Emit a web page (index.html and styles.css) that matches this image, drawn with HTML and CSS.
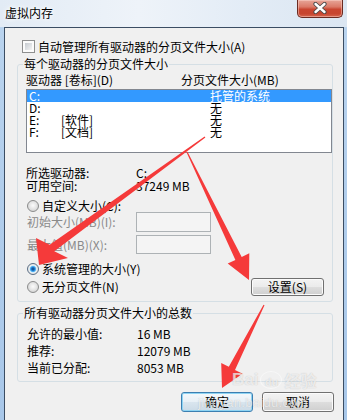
FILE: index.html
```html
<!DOCTYPE html>
<html lang="zh-CN">
<head>
<meta charset="utf-8">
<title>虚拟内存</title>
<link rel="stylesheet" href="styles.css">
</head>
<body>
<div class="window">
  <div class="titlebar">
    <span class="title">虚拟内存</span>
    <div class="close">
      <svg width="14" height="12" viewBox="0 0 14 12">
        <path d="M2.5 2 L11.5 10 M11.5 2 L2.5 10" stroke="#4a4a4a" stroke-width="4.2" stroke-linecap="round"/>
        <path d="M2.5 2 L11.5 10 M11.5 2 L2.5 10" stroke="#ffffff" stroke-width="2.4" stroke-linecap="round"/>
      </svg>
    </div>
  </div>
  <div class="client">
    <div class="check-row"><span class="checkbox"></span><span>自动管理所有驱动器的分页文件大小(A)</span></div>

    <fieldset class="group g1">
      <legend>每个驱动器的分页文件大小</legend>
      <div class="gbody">
        <div class="cols"><span>驱动器 [卷标](D)</span><span>分页文件大小(MB)</span></div>
        <div class="listbox">
          <div class="row sel"><span>C:</span><span></span><span>托管的系统</span></div>
          <div class="row"><span>D:</span><span></span><span>无</span></div>
          <div class="row"><span>E:</span><span>[软件]</span><span>无</span></div>
          <div class="row"><span>F:</span><span>[文档]</span><span>无</span></div>
        </div>
        <div class="info">
          <span>所选驱动器:</span><span>C:</span>
          <span>可用空间:</span><span>37249 MB</span>
        </div>
        <div class="radio-row r1"><span class="radio"></span><span>自定义大小(C):</span></div>
        <div class="field f1"><span class="flabel">初始大小(MB)(I):</span><span class="input"></span></div>
        <div class="field f2"><span class="flabel">最大值(MB)(X):</span><span class="input"></span></div>
        <div class="radio-row r2"><span class="radio on"></span><span>系统管理的大小(Y)</span></div>
        <div class="last-row">
          <div class="radio-row"><span class="radio"></span><span>无分页文件(N)</span></div>
          <button class="btn set">设置(S)</button>
        </div>
      </div>
    </fieldset>

    <fieldset class="group g2">
      <legend>所有驱动器分页文件大小的总数</legend>
      <div class="gbody totals">
        <span>允许的最小值:</span><span>16 MB</span>
        <span>推荐:</span><span>12079 MB</span>
        <span>当前已分配:</span><span>8053 MB</span>
      </div>
    </fieldset>

    <div class="buttons">
      <button class="btn default">确定</button>
      <button class="btn">取消</button>
    </div>
  </div>

  <svg class="annot" width="347" height="420" viewBox="0 0 347 420">
    <polygon fill="#f53a3a" points="205.4,137.5 54.3,251.2 68,258 39,265 36,238 49.7,244.8 204.6,136.5"/>
    <polygon fill="#f53a3a" points="187.5,151.7 241.7,256.9 249.3,253.2 249,280 227.7,263.6 235.4,259.9 186.5,152.3"/>
    <polygon fill="#f53a3a" points="264.5,305.3 235,370 242.6,373.8 222,388 221.2,363 228.8,366.8 263.5,304.7"/>
  </svg>

  <div class="watermark">
    <div class="wm-logo"><span class="wm-bai">Bai</span><span class="wm-paw">du</span><span class="wm-jy">经验</span></div>
    <div class="wm-url">jingyan.baidu.com</div>
  </div>
</div>
</body>
</html>
```

FILE: styles.css
```css
* { box-sizing: border-box; }
html, body { margin: 0; padding: 0; }
body {
  width: 347px;
  height: 420px;
  overflow: hidden;
  font-family: "Noto Sans CJK SC", "Noto Sans", sans-serif;
  font-size: 12px;
  color: #000;
}
.window {
  position: relative;
  width: 347px;
  height: 420px;
  display: flex;
  flex-direction: column;
  background: linear-gradient(to bottom, #e9f0f8 0, #dae6f3 27px, #b9d3ee 27px, #a8c7e9 100%);
}
.titlebar {
  height: 27px;
  display: flex;
  align-items: flex-start;
  padding-left: 5px;
  background: linear-gradient(to right, #e2ebf5 0, #eef3f9 40%, #e3ecf6 70%, #dbe6f2 100%);
}
.title {
  margin-top: 6px;
  line-height: 13px;
  font-size: 12px;
  text-shadow: 0 0 4px #fff, 0 0 6px #fff;
}
.close {
  margin-left: auto;
  margin-right: 4px;
  width: 46px;
  height: 18px;
  border: 1px solid #6a2b22;
  border-top: 0;
  border-radius: 0 0 5px 5px;
  background: linear-gradient(to bottom, #e7a598 0, #db7a68 40%, #c94530 55%, #c7452f 80%, #d5664f 100%);
  box-shadow: inset 0 0 0 1px rgba(255, 220, 210, 0.45);
  display: flex;
  align-items: center;
  justify-content: center;
}
.close svg { display: block; margin-top: -1px; }
.client {
  flex: 1;
  margin: 0 3px 0 4px;
  border: 1px solid #3b4d63;
  border-bottom: 0;
  background: #f0f0f0;
  padding-top: 12px;
}
.check-row {
  display: flex;
  align-items: center;
  height: 13px;
  line-height: 13px;
  margin-left: 17px;
}
.checkbox {
  width: 13px;
  height: 13px;
  margin-right: 3px;
  border: 1px solid #8e8f8f;
  padding: 2px;
  background: linear-gradient(135deg, #c5cad0, #f4f4f4) content-box, #fbfbfb;
}
.group {
  margin: 5px 10px 0 12px;
  padding: 0;
  border: 1px solid #d5dfe5;
  border-radius: 3px;
  min-width: 0;
}
.group legend {
  margin-left: 5px;
  padding: 0 1px;
  line-height: 12px;
  font-size: 12px;
}
.gbody { padding: 0 8px 5px 8px; }
.cols {
  display: grid;
  grid-template-columns: 155px auto;
  margin-top: 3px;
  line-height: 13px;
  height: 13px;
}
.listbox {
  margin-top: 3px;
  width: 306px;
  height: 64px;
  border: 1px solid #828790;
  background: #fff;
}
.row {
  display: grid;
  grid-template-columns: 32px 149px auto;
  height: 12px;
  line-height: 12px;
  padding-left: 2px;
  white-space: nowrap;
}
.row.sel { background: #3399ff; color: #fff; }
.info {
  margin-top: 13px;
  display: grid;
  grid-template-columns: 110px auto;
  grid-auto-rows: 13px;
  line-height: 13px;
}
.radio-row {
  display: flex;
  align-items: center;
  height: 12px;
  line-height: 12px;
  padding-left: 1px;
  white-space: nowrap;
}
.radio {
  flex: none;
  width: 12px;
  height: 12px;
  margin-right: 3px;
  border-radius: 50%;
  border: 1px solid #8b8c8c;
  background: radial-gradient(circle at 50% 45%, #fbfbfb 0, #e6e6e6 45%, #c8c8c8 100%);
}
.radio.on {
  border-color: #5b6f86;
  background: radial-gradient(circle at 50% 50%, #103e74 0, #1f73c4 1.6px, #58b8f5 2.8px, #c9ecff 3.4px, #eeeeee 3.9px, #d2d2d2 100%);
}
.r1 { margin-top: 8px; }
.field {
  display: flex;
  align-items: center;
  color: #8a8a8a;
  white-space: nowrap;
}
.flabel { width: 110px; padding-left: 1px; line-height: 12px; }
.f1 { height: 20px; }
.f2 { height: 19px; margin-top: 3px; }
.input {
  width: 75px;
  height: 100%;
  border: 1px solid #adb2b5;
  background: #f4f4f4;
}
.r2 { margin-top: 9px; }
.last-row {
  margin-top: 3px;
  height: 18px;
  display: flex;
  align-items: center;
  justify-content: space-between;
}
.btn {
  font-family: "Noto Sans CJK SC", "Noto Sans", sans-serif;
  font-size: 12px;
  color: #000;
  padding: 0;
  border: 1px solid #707070;
  border-radius: 3px;
  background: linear-gradient(to bottom, #f3f3f3 0, #ebebeb 48%, #dddddd 52%, #cfcfcf 100%);
  box-shadow: inset 0 0 0 1px #fbfbfb;
  display: flex;
  align-items: center;
  justify-content: center;
  line-height: 12px;
}
.btn.set { width: 73px; height: 18px; }
.totals {
  display: grid;
  grid-template-columns: 110px auto;
  grid-auto-rows: 17px;
  line-height: 17px;
  padding: 6px 8px 5px 9px;
}
.buttons {
  display: flex;
  justify-content: flex-end;
  gap: 9px;
  margin-top: 10px;
  padding-right: 9px;
}
.buttons .btn { width: 72px; height: 20px; }
.btn.default {
  border-color: #3c7fb1;
  box-shadow: inset 0 0 0 1px #8ed4f3;
  background: linear-gradient(to bottom, #f4f8fb 0, #e8f0f6 48%, #d9e5ee 52%, #cbdbe7 100%);
}
.annot {
  position: absolute;
  left: 0;
  top: 0;
  pointer-events: none;
}
.watermark {
  position: absolute;
  left: 198px;
  top: 370px;
  width: 125px;
  pointer-events: none;
  color: rgba(255, 255, 255, 0.7);
  text-shadow: 0 0 1px rgba(90, 90, 90, 0.35);
}
.wm-logo {
  display: flex;
  align-items: center;
  padding-left: 34px;
  height: 20px;
  font-family: "Liberation Sans", sans-serif;
  font-weight: bold;
  font-size: 17px;
}
.wm-paw {
  font-size: 11px;
  margin: 0 2px;
  width: 22px;
  height: 18px;
  border-radius: 50%;
  display: flex;
  align-items: flex-end;
  justify-content: center;
  border: 1px solid rgba(255,255,255,0.5);
}
.wm-jy { font-family: "Noto Sans CJK SC", sans-serif; font-size: 16px; }
.wm-url {
  margin-top: 6px;
  font-family: "Liberation Sans", sans-serif;
  font-size: 13px;
  line-height: 13px;
  letter-spacing: 0.3px;
}
```
